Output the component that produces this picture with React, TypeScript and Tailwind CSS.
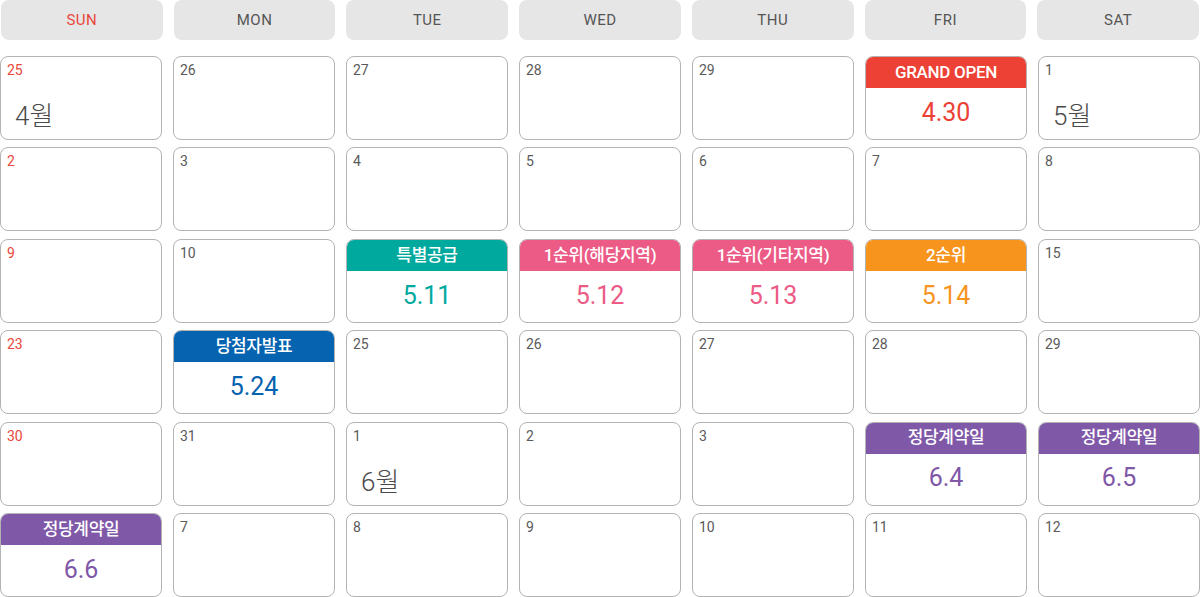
import React from 'react';

type Cell = {
  day: number;
  month?: string;
  event?: { title: string; date: string; color: 'red' | 'teal' | 'pink' | 'orange' | 'blue' | 'purple' };
};

const days = ['SUN', 'MON', 'TUE', 'WED', 'THU', 'FRI', 'SAT'];

const bandClass = {
  red: 'bg-[#ec4134]',
  teal: 'bg-[#00a99d]',
  pink: 'bg-[#ec5a86]',
  orange: 'bg-[#f7941d]',
  blue: 'bg-[#0563b0]',
  purple: 'bg-[#7f58a8]',
};

const textClass = {
  red: 'text-[#ec4134]',
  teal: 'text-[#00a99d]',
  pink: 'text-[#ec5a86]',
  orange: 'text-[#f7941d]',
  blue: 'text-[#0563b0]',
  purple: 'text-[#7f58a8]',
};

const weeks: Cell[][] = [
  [
    { day: 25, month: '4월' },
    { day: 26 },
    { day: 27 },
    { day: 28 },
    { day: 29 },
    { day: 30, event: { title: 'GRAND OPEN', date: '4.30', color: 'red' } },
    { day: 1, month: '5월' },
  ],
  [{ day: 2 }, { day: 3 }, { day: 4 }, { day: 5 }, { day: 6 }, { day: 7 }, { day: 8 }],
  [
    { day: 9 },
    { day: 10 },
    { day: 11, event: { title: '특별공급', date: '5.11', color: 'teal' } },
    { day: 12, event: { title: '1순위(해당지역)', date: '5.12', color: 'pink' } },
    { day: 13, event: { title: '1순위(기타지역)', date: '5.13', color: 'pink' } },
    { day: 14, event: { title: '2순위', date: '5.14', color: 'orange' } },
    { day: 15 },
  ],
  [
    { day: 23 },
    { day: 24, event: { title: '당첨자발표', date: '5.24', color: 'blue' } },
    { day: 25 },
    { day: 26 },
    { day: 27 },
    { day: 28 },
    { day: 29 },
  ],
  [
    { day: 30 },
    { day: 31 },
    { day: 1, month: '6월' },
    { day: 2 },
    { day: 3 },
    { day: 4, event: { title: '정당계약일', date: '6.4', color: 'purple' } },
    { day: 5, event: { title: '정당계약일', date: '6.5', color: 'purple' } },
  ],
  [
    { day: 6, event: { title: '정당계약일', date: '6.6', color: 'purple' } },
    { day: 7 },
    { day: 8 },
    { day: 9 },
    { day: 10 },
    { day: 11 },
    { day: 12 },
  ],
];

const font = { fontFamily: 'Roboto, "Noto Sans CJK KR", sans-serif' };

function DayCell({ cell, sunday }: { cell: Cell; sunday: boolean }) {
  if (cell.event) {
    const ev = cell.event;
    return (
      <div className="h-[84px] rounded-[8px] border border-[#b3b3b3] bg-white overflow-hidden flex flex-col">
        <div className={`${bandClass[ev.color]} h-[31px] flex items-center justify-center text-white text-[17px] font-medium tracking-[-0.3px]`}>
          {ev.title}
        </div>
        <div className={`flex-1 flex items-center justify-center ${textClass[ev.color]} text-[25px] pb-[2px]`}>
          {ev.date}
        </div>
      </div>
    );
  }
  return (
    <div className="h-[84px] rounded-[8px] border border-[#b3b3b3] bg-white flex flex-col px-[6px] pt-[4px]">
      <span className={`text-[14px] leading-[18px] ${sunday ? 'text-[#e8473b]' : 'text-[#5a5a5a]'}`}>{cell.day}</span>
      {cell.month && (
        <span className="mt-[21px] ml-[8px] text-[26px] leading-[32px] font-light text-[#4a4a4a]">{cell.month}</span>
      )}
    </div>
  );
}

export default function App() {
  return (
    <div className="w-[1200px] h-[597px] bg-white overflow-hidden" style={font}>
      <div className="grid grid-cols-7 gap-x-[11px] px-[1px]">
        {days.map((d, i) => (
          <div
            key={d}
            className={`h-[40px] rounded-[8px] bg-[#e6e6e7] flex items-center justify-center text-[15px] tracking-[0.5px] ${i === 0 ? 'text-[#e8473b]' : 'text-[#555555]'}`}
          >
            {d}
          </div>
        ))}
      </div>
      <div className="mt-[16px] grid grid-cols-7 gap-x-[11px] gap-y-[7.4px]">
        {weeks.map((week, wi) =>
          week.map((cell, ci) => <DayCell key={`${wi}-${ci}`} cell={cell} sunday={ci === 0} />)
        )}
      </div>
    </div>
  );
}
